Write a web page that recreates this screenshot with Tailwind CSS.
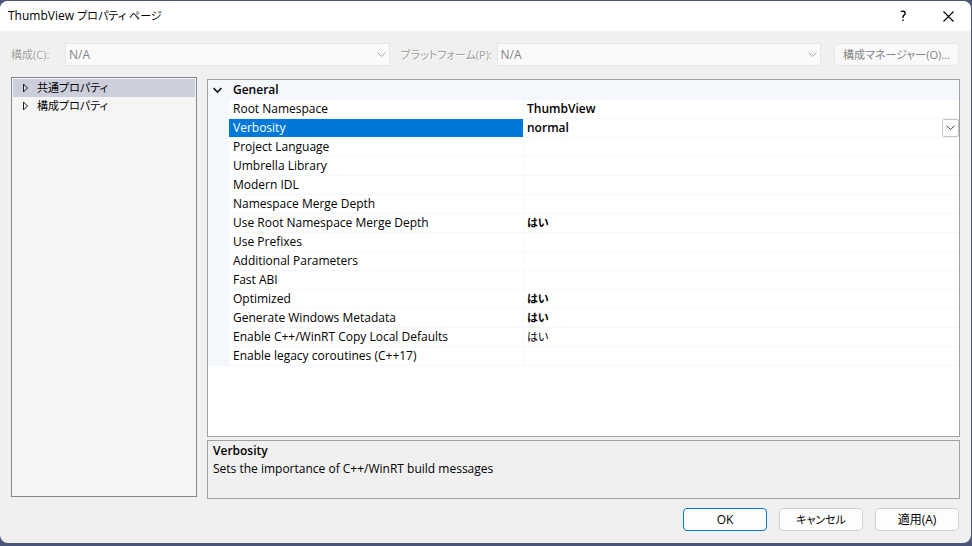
<!DOCTYPE html>
<html lang="ja">
<head>
<meta charset="utf-8">
<meta name="viewport" content="width=device-width, initial-scale=1">
<title>ThumbView プロパティ ページ</title>
<script src="https://cdn.jsdelivr.net/npm/@tailwindcss/browser@4"></script>
</head>
<body class="bg-[#4a5578] font-['Open_Sans','Noto_Sans_CJK_JP',sans-serif] [font-feature-settings:'palt'] text-[12px] leading-[18px] text-black">
<div class="flex min-h-screen flex-col pt-px pr-px pb-[3px]">
<main class="flex flex-1 flex-col overflow-hidden rounded-lg bg-[#f0f0f0]">
  <header class="flex h-[30px] items-center bg-white pl-2">
    <h1 class="flex-1 text-[12px]">ThumbView <span class="text-[11px]">プロパティ ページ</span></h1>
    <button type="button" aria-label="ヘルプ" class="flex h-full w-[45px] items-center justify-center">
      <svg width="10" height="12" viewBox="0 0 10 12" fill="none" stroke="#000" stroke-width="1.4"><path d="M2.800 1.700C4.500.700 7.200.900 7.200 3.200C7.200 5 5 5.200 5 7.200V8M5 9.500V11"/></svg>
    </button>
    <button type="button" aria-label="閉じる" class="flex h-full w-[46px] items-center justify-center">
      <svg width="11" height="11" viewBox="0 0 11 11" fill="none" stroke="#000" stroke-width="1.1"><path d="M.5.5l10 10M10.500.5l-10 10"/></svg>
    </button>
  </header>

  <div class="flex items-center pt-3 pr-3 pl-[11px]">
    <label for="config" class="w-[54px] shrink-0 text-[11px] whitespace-nowrap text-[#a0a0a0] [text-shadow:1px_1px_0_#fff]">構成(C):</label>
    <div class="relative flex-1">
      <select id="config" disabled class="block h-[23px] w-full appearance-none border border-[#e6e6e6] bg-[#fafafa] pl-[3px] text-[12px] leading-[18px] text-[#838383] opacity-100"><option>N/A</option></select>
      <svg class="pointer-events-none absolute top-2 right-1" width="9" height="7" viewBox="0 0 9 7" fill="none" stroke="#a8a8a8"><path d="M.5 1.5l4 4 4-4"/></svg>
    </div>
    <label for="platform" class="ml-[11px] w-[96px] shrink-0 text-[11px] whitespace-nowrap text-[#a0a0a0] [text-shadow:1px_1px_0_#fff]">プラットフォーム(P):</label>
    <div class="relative flex-1">
      <select id="platform" disabled class="block h-[23px] w-full appearance-none border border-[#e6e6e6] bg-[#fafafa] pl-[3px] text-[12px] leading-[18px] text-[#838383] opacity-100"><option>N/A</option></select>
      <svg class="pointer-events-none absolute top-2 right-1" width="9" height="7" viewBox="0 0 9 7" fill="none" stroke="#a8a8a8"><path d="M.5 1.5l4 4 4-4"/></svg>
    </div>
    <button type="button" disabled class="ml-[13px] h-[23px] w-[125px] shrink-0 rounded border border-[#e6e6e6] bg-[#f9f9f9] text-[11px] whitespace-nowrap text-[#838383]">構成マネージャー(O)...</button>
  </div>

  <div class="flex flex-1 gap-[10px] px-[11px] pt-[11px]">
    <nav aria-label="プロパティ" class="mb-[2px] w-[186px] shrink-0 border border-[#828790] bg-[#f5f5f5] p-px">
      <ul class="text-[11px]">
        <li><button type="button" class="flex h-[18px] w-full items-center bg-[#cccedb] pl-[9px] text-left">
          <svg class="mr-2" width="7" height="10" viewBox="0 0 7 10" fill="none" stroke="#1e1e1e"><path d="M1.500 1v8l4-4z"/></svg>共通プロパティ</button></li>
        <li><button type="button" class="flex h-[18px] w-full items-center pl-[9px] text-left">
          <svg class="mr-2" width="7" height="10" viewBox="0 0 7 10" fill="none" stroke="#1e1e1e"><path d="M1.500 1v8l4-4z"/></svg>構成プロパティ</button></li>
      </ul>
    </nav>

    <div class="flex min-w-0 flex-1 flex-col gap-[3px] pt-[2px]">
      <section class="flex-1 border border-[#a0a0a0] bg-white">
        <table class="w-full table-fixed border-separate border-spacing-0 [&_td]:h-[19px] [&_td]:border-b [&_td]:border-[#f4f7fc] [&_td]:p-0 [&_td]:pl-[3px] [&_td]:font-semibold [&_tbody_th]:border-r [&_tbody_th]:border-b [&_tbody_th]:border-[#f4f7fc] [&_tbody_th]:p-0 [&_tbody_th]:pl-1 [&_tbody_th]:text-left [&_tbody_th]:font-normal">
          <colgroup><col class="w-[21px]"><col class="w-[295px]"><col></colgroup>
          <thead>
            <tr class="bg-[#f4f7fc]">
              <th class="h-[20px] p-0"><button type="button" aria-label="General を折りたたむ" class="flex h-[18px] w-full items-center pl-[5px]"><svg width="9" height="7" viewBox="0 0 9 7" fill="none" stroke="#1e1e1e" stroke-width="1.700"><path d="M.6 1.200l3.900 3.900 3.900-3.900"/></svg></button></th>
              <th colspan="2" class="p-0 pl-1 text-left font-semibold">General</th>
            </tr>
          </thead>
          <tbody>
            <tr><td rowspan="14" class="bg-[#f4f7fc]"></td><th scope="row">Root Namespace</th><td>ThumbView</td></tr>
            <tr><th scope="row" class="bg-[#0078d7] bg-clip-padding text-white">Verbosity</th><td><div class="flex items-center justify-between"><span>normal</span><button type="button" aria-label="Verbosity の選択肢" class="flex h-[18px] w-[17px] items-center justify-center rounded-xs border border-[#c4c4c4] bg-white"><svg width="9" height="6" viewBox="0 0 9 6" fill="none" stroke="#333"><path d="M.5.7l4 4 4-4"/></svg></button></div></td></tr>
            <tr><th scope="row">Project Language</th><td></td></tr>
            <tr><th scope="row">Umbrella Library</th><td></td></tr>
            <tr><th scope="row">Modern IDL</th><td></td></tr>
            <tr><th scope="row">Namespace Merge Depth</th><td></td></tr>
            <tr><th scope="row">Use Root Namespace Merge Depth</th><td class="text-[11px]">はい</td></tr>
            <tr><th scope="row">Use Prefixes</th><td></td></tr>
            <tr><th scope="row">Additional Parameters</th><td></td></tr>
            <tr><th scope="row">Fast ABI</th><td></td></tr>
            <tr><th scope="row">Optimized</th><td class="text-[11px]">はい</td></tr>
            <tr><th scope="row">Generate Windows Metadata</th><td class="text-[11px]">はい</td></tr>
            <tr><th scope="row">Enable C++/WinRT Copy Local Defaults</th><td class="text-[11px]"><span class="font-normal">はい</span></td></tr>
            <tr><th scope="row">Enable legacy coroutines (C++17)</th><td></td></tr>
          </tbody>
        </table>
      </section>
      <section class="h-[59px] border border-[#a0a0a0] px-[5px] pt-px">
        <h2 class="text-[12px] font-semibold">Verbosity</h2>
        <p>Sets the importance of C++/WinRT build messages</p>
      </section>
    </div>
  </div>

  <footer class="flex justify-end gap-3 px-3 pt-[9px] pb-[12px]">
    <button type="button" class="h-[23px] w-[84px] rounded border border-[#0078d4] bg-[#fdfdfd]">OK</button>
    <button type="button" class="h-[23px] w-[84px] rounded border border-[#d0d0d0] bg-[#fdfdfd] text-[11px]">キャンセル</button>
    <button type="button" class="h-[23px] w-[84px] rounded border border-[#d0d0d0] bg-[#fdfdfd]">適用(A)</button>
  </footer>
</main>
</div>
</body>
</html>
